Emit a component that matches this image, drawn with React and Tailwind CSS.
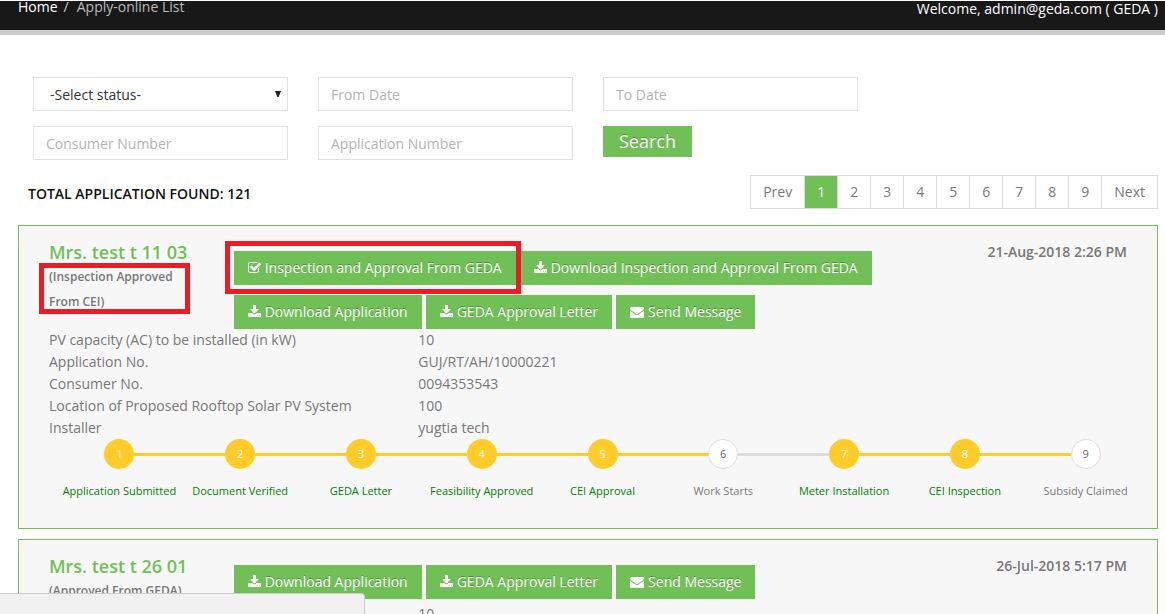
import React from "react";

const ICONS = {
  check: {
    viewBox: "64 0 1664 1792",
    className: "h-[14px] w-[13px]",
    d: "M1472 930v318q0 119-84.5 203.5t-203.5 84.5h-832q-119 0-203.5-84.5t-84.5-203.5v-832q0-119 84.5-203.5t203.5-84.5h832q63 0 117 25 15 7 18 23 3 17-9 29l-49 49q-10 10-23 10-3 0-9-2-23-6-45-6h-832q-66 0-113 47t-47 113v832q0 66 47 113t113 47h832q66 0 113-47t47-113v-254q0-13 9-22l64-64q10-10 23-10 6 0 12 3 20 8 20 29zm231-489l-814 814q-24 24-57 24t-57-24l-430-430q-24-24-24-57t24-57l110-110q24-24 57-24t57 24l263 263 647-647q24-24 57-24t57 24l110 110q24 24 24 57t-24 57z",
  },
  download: {
    viewBox: "64 0 1664 1792",
    className: "h-[14px] w-[13px]",
    d: "M1344 1344q0-26-19-45t-45-19-45 19-19 45 19 45 45 19 45-19 19-45zm256 0q0-26-19-45t-45-19-45 19-19 45 19 45 45 19 45-19 19-45zm128-224v320q0 40-28 68t-68 28h-1472q-40 0-68-28t-28-68v-320q0-40 28-68t68-28h465l135 136q58 56 136 56t136-56l136-136h464q40 0 68 28t28 68zm-325-569q17 41-14 70l-448 448q-18 19-45 19t-45-19l-448-448q-31-29-14-70 17-39 59-39h256v-448q0-26 19-45t45-19h256q26 0 45 19t19 45v448h256q42 0 59 39z",
  },
  envelope: {
    viewBox: "0 0 1792 1792",
    className: "h-[14px] w-[14px]",
    d: "M1792 710v794q0 66-47 113t-113 47h-1472q-66 0-113-47t-47-113v-794q44 49 101 87 362 246 497 345 57 42 92.5 65.5t94.5 48 110 24.5h2q51 0 110-24.5t94.5-48 92.5-65.5q170-123 498-345 57-39 100-87zm0-294q0 79-49 151t-122 123q-376 261-468 325-10 7-42.5 31t-54 38.5-52 32.5-57.5 27-50 9h-2q-23 0-50-9t-57.5-27-52-32.5-54-38.5-42.5-31q-91-64-262-182.5t-205-142.5q-62-42-117-115.5t-55-136.5q0-78 41.5-130t118.5-52h1472q65 0 112.5 47t47.5 113z",
  },
};

const COMMON_ACTIONS = [
  { icon: "download", label: "Download Application" },
  { icon: "download", label: "GEDA Approval Letter" },
  { icon: "envelope", label: "Send Message" },
];

const STEPS = [
  { label: "Application Submitted", done: true },
  { label: "Document Verified", done: true },
  { label: "GEDA Letter", done: true },
  { label: "Feasibility Approved", done: true },
  { label: "CEI Approval", done: true },
  { label: "Work Starts", done: false },
  { label: "Meter Installation", done: true },
  { label: "CEI Inspection", done: true },
  { label: "Subsidy Claimed", done: false },
];

const APPLICATIONS = [
  {
    name: "Mrs. test t 11 03",
    status: "(Inspection Approved From CEI)",
    marked: true,
    date: "21-Aug-2018 2:26 PM",
    actions: [
      { icon: "check", label: "Inspection and Approval From GEDA", marked: true },
      { icon: "download", label: "Download Inspection and Approval From GEDA" },
      ...COMMON_ACTIONS,
    ],
    details: [
      ["PV capacity (AC) to be installed (in kW)", "10"],
      ["Application No.", "GUJ/RT/AH/10000221"],
      ["Consumer No.", "0094353543"],
      ["Location of Proposed Rooftop Solar PV System", "100"],
      ["Installer", "yugtia tech"],
    ],
    steps: STEPS,
  },
  {
    name: "Mrs. test t 26 01",
    status: "(Approved From GEDA)",
    date: "26-Jul-2018 5:17 PM",
    actions: COMMON_ACTIONS,
    details: [["PV capacity (AC) to be installed (in kW)", "10"]],
    steps: [],
  },
];

const FIELD =
  "h-[34px] w-full border border-[#e1e1e1] bg-white px-3 text-sm text-[#333] outline-none placeholder:text-[#b3b3b3] placeholder:opacity-100";

function Icon({ name }) {
  const icon = ICONS[name];
  return (
    <svg
      viewBox={icon.viewBox}
      className={`${icon.className} shrink-0 fill-current`}
      aria-hidden="true"
    >
      <path d={icon.d} />
    </svg>
  );
}

function ActionButton({ icon, label, marked }) {
  return (
    <div className="relative">
      <button
        type="button"
        className="flex h-[34px] items-center gap-1 bg-[#71bf57] px-[14px] text-sm whitespace-nowrap text-white [text-shadow:0_-1px_0_rgba(0,0,0,0.25)]"
      >
        <Icon name={icon} />
        {label}
      </button>
      {marked && (
        <span className="pointer-events-none absolute -top-[10px] -right-[5px] -bottom-[9px] -left-[9px] z-10 border-5 border-[#ed1c24]" />
      )}
    </div>
  );
}

function Steps({ steps }) {
  return (
    <ol className="grid grid-cols-9 pr-[11px] pl-10 text-center text-[11px]">
      {steps.map((step, i) => (
        <li key={step.label}>
          <div className="flex items-center">
            <span
              className={`h-[3px] flex-1 ${
                i === 0 ? "bg-transparent" : steps[i - 1].done ? "bg-[#ffcc29]" : "bg-[#ddd]"
              }`}
            />
            <span
              className={`flex size-[30px] items-center justify-center rounded-full ${
                step.done ? "bg-[#ffcc29] text-white" : "border border-[#ddd] bg-white text-[#666]"
              }`}
            >
              {i + 1}
            </span>
            <span
              className={`h-[3px] flex-1 ${
                i === steps.length - 1 ? "bg-transparent" : step.done ? "bg-[#ffcc29]" : "bg-[#ddd]"
              }`}
            />
          </div>
          <p
            className={`mt-[11px] leading-[22px] whitespace-nowrap ${
              step.done ? "text-[#008000]" : "text-[#777]"
            }`}
          >
            {step.label}
          </p>
        </li>
      ))}
    </ol>
  );
}

function ApplicationCard({ app }) {
  return (
    <article className="border border-[#71bf57] bg-[#f7f7f7] pt-[13px] pb-[26px] text-sm text-[#777]">
      <div className="grid grid-cols-12 gap-x-[30px] px-[30px]">
        <div className="col-span-2">
          <h2 className="pt-px text-lg leading-6 font-semibold whitespace-nowrap text-[#71bf57]">
            {app.name}
          </h2>
          <div className="relative">
            <p className="text-xs leading-[25px] font-semibold">{app.status}</p>
            {app.marked && (
              <span className="pointer-events-none absolute -top-px right-[14px] bottom-0 -left-[10px] border-5 border-[#ed1c24]" />
            )}
          </div>
        </div>
        <div className="col-span-8 flex flex-wrap content-start gap-x-1 gap-y-[10px] pt-3">
          {app.actions.map((action) => (
            <ActionButton key={action.label} {...action} />
          ))}
        </div>
        <time className="col-span-2 text-right leading-[25px] font-semibold whitespace-nowrap">
          {app.date}
        </time>
      </div>
      <dl className="px-[30px] leading-[22px]">
        {app.details.map(([term, value]) => (
          <div key={term} className="grid grid-cols-12 gap-x-[30px]">
            <dt className="col-span-4">{term}</dt>
            <dd className="col-span-8">{value}</dd>
          </div>
        ))}
      </dl>
      {app.steps.length > 0 && <Steps steps={app.steps} />}
    </article>
  );
}

function Pagination() {
  const pages = ["Prev", "1", "2", "3", "4", "5", "6", "7", "8", "9", "Next"];
  return (
    <nav aria-label="Pages" className="flex border-l border-[#ddd] text-sm">
      {pages.map((page) => (
        <a
          key={page}
          href="#"
          className={`flex h-[34px] items-center border-y border-r border-[#ddd] px-3 ${
            page === "1" ? "bg-[#71bf57] text-white" : "bg-white text-[#777]"
          }`}
        >
          {page}
        </a>
      ))}
    </nav>
  );
}

export default function App() {
  return (
    <div className="h-screen overflow-hidden bg-white font-['Open_Sans',sans-serif]">
      <header className="flex items-start justify-between border-t border-b-5 border-t-white border-b-[#ccc] bg-[#181818] pr-[7px] pb-[9px] pl-[18px] text-sm text-white">
        <nav aria-label="Breadcrumb" className="flex h-[20px] items-start leading-3">
          <a href="#" className="font-medium">
            Home
          </a>
          <span className="px-[6px] text-[#ccc]">/</span>
          <span className="pl-[2px] text-[#bbb]">Apply-online List</span>
        </nav>
        <p className="leading-4">Welcome, admin@geda.com ( GEDA )</p>
      </header>

      <main className="pr-[7px] pl-[18px]">
        <form
          className="grid grid-cols-4 gap-x-[30px] gap-y-[15px] px-[15px] pt-[42px]"
          onSubmit={(e) => e.preventDefault()}
        >
          <div className="relative">
            <select
              aria-label="Status"
              className="h-[34px] w-full appearance-none border border-[#e1e1e1] bg-white px-4 pt-[2px] text-sm text-[#333] outline-none"
            >
              <option>-Select status-</option>
            </select>
            <svg
              viewBox="0 0 6 6"
              className="pointer-events-none absolute top-[14px] right-[7px] size-[6px] fill-[#222]"
              aria-hidden="true"
            >
              <path d="M0 0h6L3.6 6H2.4z" />
            </svg>
          </div>
          <input aria-label="From Date" placeholder="From Date" className={FIELD} />
          <input aria-label="To Date" placeholder="To Date" className={FIELD} />
          <input
            aria-label="Consumer Number"
            placeholder="Consumer Number"
            className={`${FIELD} col-start-1`}
          />
          <input aria-label="Application Number" placeholder="Application Number" className={FIELD} />
          <div>
            <button
              type="submit"
              className="flex h-[31px] items-center bg-[#71bf57] px-4 pb-[2px] text-lg text-white [text-shadow:0_-1px_0_rgba(0,0,0,0.25)]"
            >
              Search
            </button>
          </div>
        </form>

        <div className="mt-[15px] mb-4 flex items-center justify-between pl-[10px]">
          <h1 className="pt-1 text-sm font-semibold text-[#111]">TOTAL APPLICATION FOUND: 121</h1>
          <Pagination />
        </div>

        <div className="flex flex-col gap-[10px]">
          {APPLICATIONS.map((app) => (
            <ApplicationCard key={app.name} app={app} />
          ))}
        </div>
      </main>

      <div className="fixed bottom-0 left-0 h-[21px] w-[365px] rounded-tr border-t border-r border-[#ccc] bg-[#f1f1f1]" />
    </div>
  );
}
